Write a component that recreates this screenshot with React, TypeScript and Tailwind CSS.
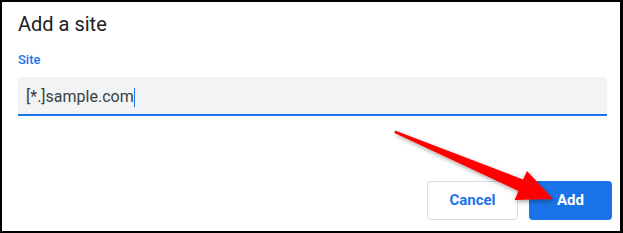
export default function App() {
  return (
    <div className="relative w-[623px] h-[233px] bg-white border-l-2 border-t-2 border-r-[3px] border-b-2 border-black overflow-hidden font-['Roboto',sans-serif]">
      <div className="pl-4 pt-2">
        <h1 className="text-[20px] leading-[28px] text-[#202124] font-normal">Add a site</h1>
        <div className="mt-[14px] text-[13px] leading-[16px] font-medium text-[#1a73e8]">Site</div>
        <div className="mt-[9px] mr-[13px] h-[39px] rounded-t-[4px] bg-[#f1f3f4] border-b-2 border-[#1a73e8] px-2 pt-[8px]">
          <div className="flex items-center h-[24px] text-[16px] leading-[24px] text-[#3c4043]">
            <span>[*.]sample.com</span>
            <span className="w-px h-[19px] bg-[#1a73e8]" />
          </div>
        </div>
      </div>

      <div className="mt-[65px] pr-2 flex justify-end gap-[11px]">
        <button className="w-[91px] h-[39px] rounded-[4px] border border-[#dadce0] bg-white text-[15px] font-bold text-[#1a73e8]">
          Cancel
        </button>
        <button className="w-[83px] h-[39px] rounded-[4px] bg-[#1a73e8] text-[15px] font-bold text-white">
          Add
        </button>
      </div>

      <svg
        className="absolute left-0 top-0 pointer-events-none"
        width="623"
        height="233"
        viewBox="2 2 623 233"
      >
        <defs>
          <filter id="sh" x="-20%" y="-20%" width="140%" height="140%">
            <feDropShadow dx="1" dy="2" stdDeviation="2" floodColor="#000" floodOpacity="0.35" />
          </filter>
        </defs>
        <polygon
          filter="url(#sh)"
          fill="#ff0000"
          points="395,130.5 523,179.5 527,171 553,199 514.6,200 518.5,191 394.5,133"
        />
      </svg>
    </div>
  );
}
